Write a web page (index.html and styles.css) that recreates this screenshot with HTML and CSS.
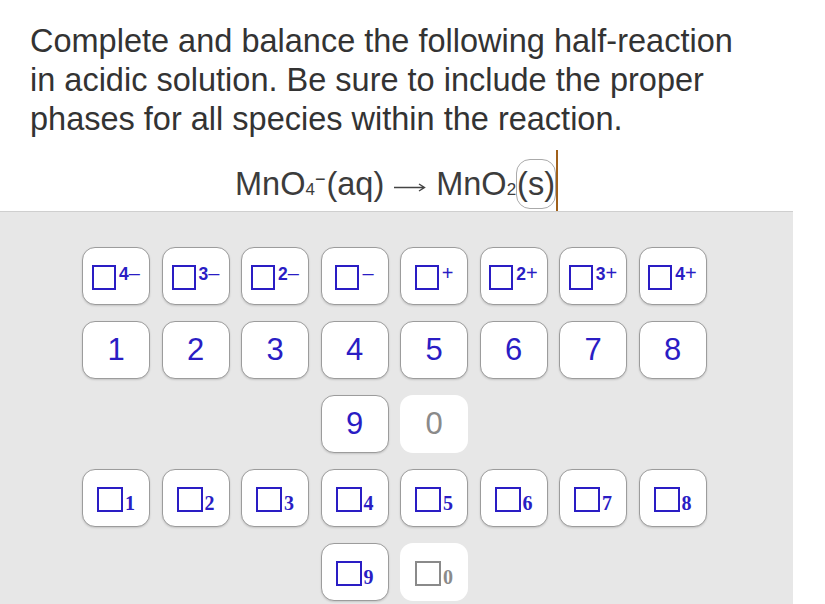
FILE: index.html
```html
<!DOCTYPE html>
<html lang="en">

<head>
    <meta charset="UTF-8">
    <meta name="viewport" content="width=device-width, initial-scale=1.0">
    <title>Half-reaction</title>
    <link rel="stylesheet" href="styles.css">
</head>

<body>
    <div class="question">
        Complete and balance the following half-reaction in acidic solution. Be sure to include the proper phases for all species within the reaction.
    </div>
    <div class="equation">
        <span class="eq-text">MnO<span class="small">4</span><span class="charge">&minus;</span>(aq)<svg class="arrow" width="32" height="10" viewBox="0 0 32 10"><path d="M0 5.5H30M25 2L30.5 5.5L25 9" fill="none" stroke="#444" stroke-width="1.4"/></svg>MnO<span class="small">2</span><span class="phase">(s)</span></span><span class="cursor"></span>
    </div>
    <div class="keypad">
        <div class="keys">
            <button class="key"><span class="box"></span><span class="sup">4<i>&ndash;</i></span></button>
            <button class="key"><span class="box"></span><span class="sup">3<i>&ndash;</i></span></button>
            <button class="key"><span class="box"></span><span class="sup">2<i>&ndash;</i></span></button>
            <button class="key"><span class="box"></span><span class="sup"><i>&ndash;</i></span></button>
            <button class="key"><span class="box"></span><span class="sup"><i>+</i></span></button>
            <button class="key"><span class="box"></span><span class="sup">2<i>+</i></span></button>
            <button class="key"><span class="box"></span><span class="sup">3<i>+</i></span></button>
            <button class="key"><span class="box"></span><span class="sup">4<i>+</i></span></button>

            <button class="key num">1</button>
            <button class="key num">2</button>
            <button class="key num">3</button>
            <button class="key num">4</button>
            <button class="key num">5</button>
            <button class="key num">6</button>
            <button class="key num">7</button>
            <button class="key num">8</button>

            <button class="key num col4">9</button>
            <button class="key num off">0</button>

            <button class="key col1"><span class="box wide"></span><span class="sub">1</span></button>
            <button class="key"><span class="box wide"></span><span class="sub">2</span></button>
            <button class="key"><span class="box wide"></span><span class="sub">3</span></button>
            <button class="key"><span class="box wide"></span><span class="sub">4</span></button>
            <button class="key"><span class="box wide"></span><span class="sub">5</span></button>
            <button class="key"><span class="box wide"></span><span class="sub">6</span></button>
            <button class="key"><span class="box wide"></span><span class="sub">7</span></button>
            <button class="key"><span class="box wide"></span><span class="sub">8</span></button>

            <button class="key col4"><span class="box wide"></span><span class="sub">9</span></button>
            <button class="key off"><span class="box wide"></span><span class="sub">0</span></button>
        </div>
    </div>
</body>

</html>
```

FILE: styles.css
```css
body {
    margin: 0;
    background: #fff;
    font-family: "Liberation Sans", Arial, sans-serif;
    color: #333;
}

.question {
    font-size: 32.5px;
    line-height: 39px;
    padding: 22px 0 0 30px;
    width: 730px;
}

.equation {
    display: flex;
    justify-content: center;
    height: 61px;
    margin-top: 11px;
    width: 793px;
}

.eq-text {
    font-size: 32.5px;
    line-height: 38px;
    color: #3c3c3c;
    padding-top: 9px;
}

.small {
    font-size: 17px;
}

.charge {
    font-size: 18px;
    vertical-align: 10px;
    margin-right: 1px;
}

.arrow {
    margin: 0 10px;
    vertical-align: 3px;
}

.phase {
    display: inline-block;
    border: 1px solid #aaa;
    border-radius: 14px;
    padding: 5px 0;
}

.cursor {
    width: 2px;
    background: #a0601a;
}

.keypad {
    width: 793px;
    height: 392px;
    background: #e7e7e7;
    border-top: 1px solid #cfcfcf;
}

.keys {
    display: grid;
    grid-template-columns: repeat(8, 68px);
    grid-auto-rows: 58px;
    column-gap: 11.5px;
    row-gap: 16px;
    padding: 35px 0 0 82px;
}

.key {
    display: flex;
    align-items: center;
    justify-content: center;
    background: #fff;
    border: 1px solid #9c9c9c;
    border-radius: 13px;
    box-shadow: 0 1px 2px rgba(0, 0, 0, 0.15);
    color: #2a1dc4;
    font-family: "Liberation Sans", Arial, sans-serif;
    padding: 0;
}

.num {
    font-size: 31px;
}

.col1 {
    grid-column: 1;
}

.col4 {
    grid-column: 4;
}

.off {
    border-color: transparent;
    box-shadow: none;
    color: #8a8a8a;
}

.box {
    width: 20px;
    height: 21px;
    border: 2px solid currentColor;
    margin-top: 3px;
}

.box.wide {
    width: 22px;
}

.sup {
    align-self: flex-start;
    margin-top: 19px;
    margin-left: 3px;
    font-size: 17.5px;
    line-height: 13px;
    font-weight: bold;
}

.sup i {
    font-style: normal;
    font-weight: normal;
    font-size: 20px;
}

.sub {
    align-self: flex-end;
    margin-bottom: 16px;
    margin-left: 2px;
    font-family: "Liberation Serif", "Times New Roman", serif;
    font-weight: bold;
    font-size: 20px;
    line-height: 14px;
}
```
